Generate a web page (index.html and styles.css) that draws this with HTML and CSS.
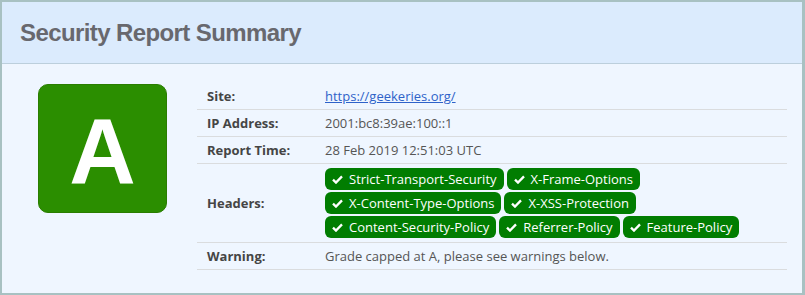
FILE: index.html
```html
<!DOCTYPE html>
<html lang="en">
<head>
<meta charset="UTF-8" />
<meta name="viewport" content="width=device-width, initial-scale=1" />
<title>Security Report Summary</title>
<link rel="stylesheet" href="styles.css">
</head>
<body>

<div class="report">
  <div class="report-header">
    <h1>Security Report Summary</h1>
  </div>

  <div class="report-body">
    <div class="grade"><span>A</span></div>

    <table class="summary">
      <tr>
        <th>Site:</th>
        <td><a href="#">https://geekeries.org/</a></td>
      </tr>
      <tr>
        <th>IP Address:</th>
        <td>2001:bc8:39ae:100::1</td>
      </tr>
      <tr>
        <th>Report Time:</th>
        <td>28 Feb 2019 12:51:03 UTC</td>
      </tr>
      <tr>
        <th>Headers:</th>
        <td>
          <div class="badges">
            <span class="badge"><svg class="tick" viewBox="0 0 12 10"><path d="M1 5.2 L4.3 8.4 L11 1.6" /></svg>Strict-Transport-Security</span>
            <span class="badge"><svg class="tick" viewBox="0 0 12 10"><path d="M1 5.2 L4.3 8.4 L11 1.6" /></svg>X-Frame-Options</span>
            <span class="badge"><svg class="tick" viewBox="0 0 12 10"><path d="M1 5.2 L4.3 8.4 L11 1.6" /></svg>X-Content-Type-Options</span>
            <span class="badge"><svg class="tick" viewBox="0 0 12 10"><path d="M1 5.2 L4.3 8.4 L11 1.6" /></svg>X-XSS-Protection</span>
            <span class="badge"><svg class="tick" viewBox="0 0 12 10"><path d="M1 5.2 L4.3 8.4 L11 1.6" /></svg>Content-Security-Policy</span>
            <span class="badge"><svg class="tick" viewBox="0 0 12 10"><path d="M1 5.2 L4.3 8.4 L11 1.6" /></svg>Referrer-Policy</span>
            <span class="badge"><svg class="tick" viewBox="0 0 12 10"><path d="M1 5.2 L4.3 8.4 L11 1.6" /></svg>Feature-Policy</span>
          </div>
        </td>
      </tr>
      <tr>
        <th>Warning:</th>
        <td>Grade capped at A, please see warnings below.</td>
      </tr>
    </table>
  </div>
</div>

</body>
</html>
```

FILE: styles.css
```css
  body {
    margin: 0;
    background-color: #eef6ff;
    font-family: "Open Sans", "Noto Sans", sans-serif;
  }

  .report {
    border: 2px solid #a8c1c2;
    border-right-width: 3px;
    height: 295px;
    box-sizing: border-box;
    background-color: #eff6ff;
  }

  .report-header {
    background-color: #dbebfd;
    border-bottom: 1px solid #bccfdc;
    height: 61px;
    display: flex;
    align-items: center;
    padding-left: 18px;
  }

  .report-header h1 {
    margin: 0;
    font-family: "Liberation Sans", Arial, sans-serif;
    font-size: 24px;
    letter-spacing: -0.6px;
    font-weight: bold;
    color: #68686e;
  }

  .report-body {
    display: flex;
    align-items: flex-start;
    padding: 20px 15px 0 36px;
  }

  .grade {
    width: 127px;
    height: 127px;
    flex: none;
    border: 1px solid #2a7d00;
    border-radius: 10px;
    background-color: #2b8e00;
    display: flex;
    justify-content: center;
    align-items: center;
    margin-right: 30px;
  }

  .grade span {
    font-family: "Liberation Sans", Arial, sans-serif;
    font-weight: bold;
    font-size: 92px;
    line-height: 1;
    color: white;
    margin-top: 4px;
  }

  .summary {
    flex: 1;
    border-collapse: collapse;
    font-size: 13px;
    margin-top: -1px;
  }

  .summary th,
  .summary td {
    padding: 4px 10px;
    line-height: 18px;
    border-bottom: 1px solid #dadcde;
    text-align: left;
    vertical-align: middle;
  }

  .summary th {
    width: 98px;
    color: #454545;
    font-weight: bold;
  }

  .summary td {
    color: #555;
  }

  .summary a {
    color: #2e62c9;
  }

  .badges {
    display: flex;
    flex-wrap: wrap;
    gap: 2px 3px;
  }

  .badge {
    display: inline-flex;
    align-items: center;
    height: 22px;
    box-sizing: border-box;
    padding: 0 7px;
    border-radius: 6px;
    background-color: #017d01;
    color: white;
    white-space: nowrap;
  }

  .tick {
    width: 11px;
    height: 9px;
    margin-right: 6px;
    fill: none;
    stroke: white;
    stroke-width: 2.6;
  }
```
